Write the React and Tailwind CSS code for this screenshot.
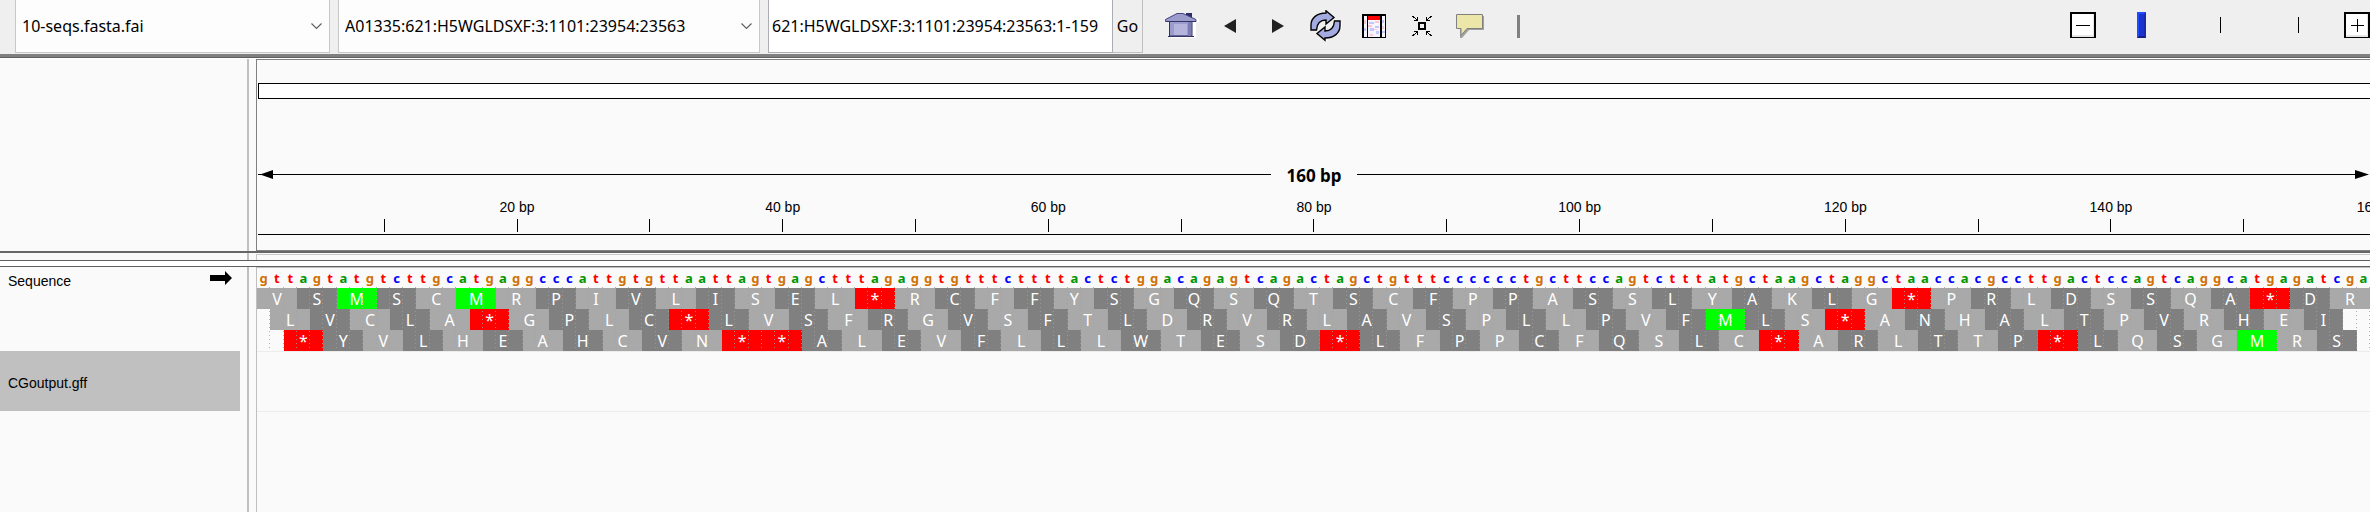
const SEQUENCE =
  'gttagtatgtcttgcatgaggcccattgtgttaattagtgagctttagaggtgtttcttttactctggacagagtcagactagctgtttcccccctgcttccagtctttatgctaagctaggctaaccacgccttgactccagtcaggcatgagatcga';

const AMINO_ACIDS =
  'FFLLSSSSYY**CC*WLLLLPPPPHHQQRRRRIIIMTTTTNNKKSSRRVVVVAAAADDEEGGGG';

const BASE_COLORS = {
  a: 'text-[#009600]',
  c: 'text-[#0000ff]',
  g: 'text-[#d17105]',
  t: 'text-[#ff0000]',
};

const FRAMES = [0, 1, 2];
const TICKS = [10, 20, 30, 40, 50, 60, 70, 80, 90, 100, 110, 120, 130, 140, 150];
const BASE_GRID = 'grid grid-cols-[repeat(159,minmax(0,1fr))]';

function translate(offset) {
  const acids = [];
  for (let i = offset; i + 3 <= SEQUENCE.length; i += 3) {
    const [x, y, z] = [0, 1, 2].map((k) => 'tcag'.indexOf(SEQUENCE[i + k]));
    acids.push(AMINO_ACIDS[x * 16 + y * 4 + z]);
  }
  return acids;
}

function acidColor(acid, index) {
  if (acid === 'M') return 'bg-[#00ff00]';
  if (acid === '*') return 'bg-[#ff0000]';
  return index % 2 === 0 ? 'bg-[#a9a9a9]' : 'bg-[#808080]';
}

function HomeIcon() {
  return (
    <svg width="34" height="28" viewBox="0 0 34 28" aria-hidden="true">
      <path d="M5 26h26V10h3V7l-3-1" fill="#ffffff" />
      <path d="M21 1h6v6h-6z" fill="#2c2c66" />
      <path d="M4.500 9h22.500v15H4.500z" fill="#9c9ccc" stroke="#333366" />
      <path d="M9 12h13v11H9z" fill="#b4b4dc" />
      <path d="M23 10h3v14h-3z" fill="#7c7cb2" />
      <path d="M.5 7.500 12 1.500h6l13 6V9.500H.5z" fill="#9c9ccc" stroke="#444480" />
      <path d="M1 9.500h30" stroke="#333366" />
      <path d="M3 24.500h26" stroke="#333366" />
    </svg>
  );
}

function RefreshIcon() {
  const arrow = 'M1 20V15C1 8 7 3 16 3V.8L24 7.500 16 14V10C11 10 7 13 6.500 20Z';
  return (
    <svg width="32" height="32" viewBox="0 0 32 32" aria-hidden="true">
      <path d="M17 31l-2-2M31 13v6" stroke="#ffffff" strokeWidth="2" />
      <g fill="#a3abe0" stroke="#000000" strokeWidth="1.4">
        <path d={arrow} />
        <path d={arrow} transform="rotate(180 15.5 15.5)" />
      </g>
    </svg>
  );
}

function RegionIcon() {
  return (
    <svg width="24" height="24" viewBox="0 0 24 24" shapeRendering="crispEdges" aria-hidden="true">
      <path d="M0 0h24v24H0z" fill="#000000" />
      <path d="M2 2h3v21H2zM6 2h12v21H6zM20 2h3v21h-3z" fill="#f6f4ff" />
      <path d="M6 2h12v4H6z" fill="#ff0000" />
      <path d="M7 8h5v2H7zM13 12h4v2h-4zM8 14h4v3H8zM14 17h3v3h-3zM20 6h2v3h-2zM2 14h2v3H2zM20 17h3v2h-3z" fill="#c4c6ff" />
      <path d="M13 7h4v2h-4zM6 11h4v2H6zM12 15h3v1h-3zM8 20h3v2H8zM2 6h2v4H2zM20 12h2v3h-2z" fill="#ffc8c8" />
    </svg>
  );
}

function CollapseIcon() {
  return (
    <svg width="20" height="20" viewBox="0 0 20 20" shapeRendering="crispEdges" aria-hidden="true">
      <rect x="7" y="7" width="6" height="6" fill="none" stroke="#000000" strokeWidth="2" />
      <path
        d="M0 0h2v1h1v1h1v1h1V1h1v4H2V4h2V3H3V2H1V1H0zM20 0h-2v1h-1v1h-1v1h-1V1h-1v4h4V4h-2V3h1V2h2V1h1zM0 20h2v-1h1v-1h1v-1h1v2h1v-4H2v1h2v1H3v1H1v1H0zM20 20h-2v-1h-1v-1h-1v-1h-1v2h-1v-4h4v1h-2v1h1v1h2v1h1z"
        fill="#000000"
      />
    </svg>
  );
}

function BubbleIcon() {
  return (
    <svg width="28" height="24" viewBox="0 0 28 24" aria-hidden="true">
      <path d="M2 2h26v14H13l-7 8H4v-8z" fill="#a0a0a0" />
      <path d="M.5.5h26v14H11l-6 7v-7H.5z" fill="#ece7a8" stroke="#808080" />
    </svg>
  );
}

function ZoomIcon({ plus }) {
  return (
    <svg width="26" height="26" viewBox="0 0 26 26" shapeRendering="crispEdges" aria-hidden="true">
      <path d="M0 0h26v26H0z" fill="#000000" />
      <path d="M2 2h22v23H2z" fill="#e6e6e6" />
      <path d="M2 2h21v21H2z" fill="#ffffff" />
      <path d={plus ? 'M7 13h13v1H7zM13 7h1v13h-1z' : 'M6 13h14v1H6z'} fill="#000000" />
    </svg>
  );
}

function Triangle({ left }) {
  return (
    <svg width="12" height="14" viewBox="0 0 12 14" aria-hidden="true">
      <path d={left ? 'M0 7 12 0V14Z' : 'M12 7 0 0V14Z'} fill="#222222" />
    </svg>
  );
}

function ToolButton({ label, children }) {
  return (
    <button type="button" aria-label={label} className="flex h-12 w-12 shrink-0 items-center justify-center">
      {children}
    </button>
  );
}

function Combo({ label, value, className }) {
  return (
    <div className={`relative shrink-0 border-x border-b border-[#c8c8c8] bg-[#fdfdfd] ${className}`}>
      <select
        aria-label={label}
        defaultValue={value}
        className="h-full w-full appearance-none bg-transparent px-1.5 outline-none"
      >
        <option>{value}</option>
      </select>
      <svg
        width="11"
        height="7"
        viewBox="0 0 11 7"
        aria-hidden="true"
        className="pointer-events-none absolute top-[23px] right-[7px]"
      >
        <path d="M.5.5l5 5 5-5" fill="none" stroke="#606060" strokeWidth="1.2" />
      </svg>
    </div>
  );
}

function Toolbar() {
  return (
    <header className="flex h-[54px] shrink-0 items-stretch overflow-hidden bg-[#efefef] pl-[15px] text-[16px]">
      <Combo label="Genome" value="10-seqs.fasta.fai" className="mb-px w-[315px]" />
      <Combo
        label="Chromosome"
        value="A01335:621:H5WGLDSXF:3:1101:23954:23563"
        className="mb-px ml-2 w-[422px]"
      />
      <input
        aria-label="Locus"
        defaultValue="621:H5WGLDSXF:3:1101:23954:23563:1-159"
        className="mb-px ml-2 w-[345px] shrink-0 border-x border-b border-[#abadb3] bg-white px-[3px] outline-none"
      />
      <button type="button" className="mb-px w-[30px] shrink-0 border-r border-b border-[#c0c0c0]">
        Go
      </button>
      <div className="ml-[15px] flex h-[52px] items-center">
        <ToolButton label="Home"><HomeIcon /></ToolButton>
        <ToolButton label="Back"><Triangle left /></ToolButton>
        <ToolButton label="Forward"><Triangle /></ToolButton>
        <ToolButton label="Refresh"><RefreshIcon /></ToolButton>
        <ToolButton label="Define a region of interest"><RegionIcon /></ToolButton>
        <ToolButton label="Resize tracks to fit in window"><CollapseIcon /></ToolButton>
        <ToolButton label="Popup text behavior"><BubbleIcon /></ToolButton>
        <div className="ml-[23px] h-[23px] w-[3px] bg-[#808080]" />
      </div>
      <div className="ml-auto flex h-[50px] shrink-0 items-center">
        <button type="button" aria-label="Zoom out"><ZoomIcon /></button>
        <div className="relative mx-[41px] h-[26px] w-[166px]">
          <div className="absolute inset-x-1 top-[5px] flex justify-between">
            <span className="h-4 w-px bg-black" />
            <span className="h-4 w-px bg-black" />
            <span className="h-4 w-px bg-black" />
          </div>
          <input
            type="range"
            aria-label="Zoom level"
            min="0"
            max="2"
            defaultValue="0"
            className="relative block h-[26px] w-full appearance-none bg-transparent [&::-webkit-slider-thumb]:h-[26px] [&::-webkit-slider-thumb]:w-[9px] [&::-webkit-slider-thumb]:appearance-none [&::-webkit-slider-thumb]:border-2 [&::-webkit-slider-thumb]:border-t-[#1f4cff] [&::-webkit-slider-thumb]:border-r-[#1a2cae] [&::-webkit-slider-thumb]:border-b-[#142080] [&::-webkit-slider-thumb]:border-l-[#1f4cff] [&::-webkit-slider-thumb]:bg-[#1a32d0]"
          />
        </div>
        <button type="button" aria-label="Zoom in"><ZoomIcon plus /></button>
      </div>
    </header>
  );
}

function NameColumn({ children }) {
  return (
    <div className="mr-[7px] w-[249px] shrink-0 border-r-2 border-[#c0c0c0]">{children}</div>
  );
}

function Ruler() {
  return (
    <div className="min-w-0 flex-1 overflow-hidden border-t border-b border-l border-[#808080] pb-[15px] pl-px">
      <div className="mt-[23px] h-4 border-y border-l border-black bg-white" />
      <div className="mt-[61px] flex h-[29px] items-center">
        <svg width="15" height="9" viewBox="0 0 15 9" aria-hidden="true">
          <path d="M0 4h3v1H0zM2 4.500 15 0V9Z" />
        </svg>
        <div className="h-px flex-1 bg-black" />
        <span className="px-[15px] pt-0.5 text-[17px] leading-[29px] font-bold">160 bp</span>
        <div className="h-px flex-1 bg-black" />
        <svg width="15" height="9" viewBox="0 0 15 9" aria-hidden="true">
          <path d="M14 4.500 0 0V9Z" />
        </svg>
      </div>
      <div className={`mt-2.5 font-['Liberation_Sans',sans-serif] text-[14px] leading-4 whitespace-nowrap ${BASE_GRID}`}>
        {TICKS.map((tick) => (
          <div key={tick} className="row-start-1 flex flex-col items-center" style={{ gridColumnStart: tick }}>
            <span className="h-4">{tick % 20 === 0 ? `${tick} bp` : ''}</span>
            <span className="mt-1 h-[13px] w-px bg-black" />
          </div>
        ))}
        <span className="col-start-[159] row-start-1">160 bp</span>
      </div>
      <div className="mt-0.5 h-px bg-black" />
    </div>
  );
}

function SequenceTrack() {
  return (
    <div className="relative border-b border-[#ececec]">
      <div className={`h-5 text-center text-[13px] leading-5 font-bold ${BASE_GRID}`}>
        {SEQUENCE.split('').map((base, i) => (
          <span key={i} className={BASE_COLORS[base]}>{base}</span>
        ))}
      </div>
      {FRAMES.map((offset) => (
        <div key={offset} className={`h-[21px] text-center text-[16px] leading-[22px] text-white ${BASE_GRID}`}>
          {offset > 0 && <span style={{ gridColumn: `span ${offset}` }} />}
          {translate(offset).map((acid, i) => (
            <span key={i} className={`col-span-3 h-[21px] ${acidColor(acid, i)}`}>{acid}</span>
          ))}
        </div>
      ))}
      <div className={`pointer-events-none absolute inset-x-0 top-[19px] h-[61px] ${BASE_GRID}`}>
        {SEQUENCE.split('').map((_, i) => (
          <span
            key={i}
            className="w-px justify-self-end bg-[repeating-linear-gradient(to_bottom,#a0a0a0cc_0_1px,transparent_1px_4px)]"
          />
        ))}
      </div>
    </div>
  );
}

export default function App() {
  return (
    <div className="flex min-h-screen flex-col overflow-hidden bg-[#fafafa] font-['Noto_Sans',sans-serif] text-black">
      <Toolbar />
      <div className="h-1 border-b border-[#606060] bg-[#808080]" />
      <div className="h-px bg-white" />
      <section className="flex">
        <NameColumn />
        <Ruler />
      </section>
      <div className="h-0.5 bg-[#666666]" />
      <div className="flex h-[7px]">
        <NameColumn />
        <div className="mt-px flex-1 border-t border-l border-[#c8c8c8]" />
      </div>
      <div className="h-[7px] border-y border-[#606060] bg-white" />
      <main className="flex flex-1">
        <NameColumn>
          <div className="flex h-[84px] items-start justify-between pr-[15px] pl-2 font-['Liberation_Sans',sans-serif] text-[14px] leading-7">
            <span>Sequence</span>
            <svg width="22" height="14" viewBox="0 0 22 14" aria-hidden="true" className="mt-1">
              <path d="M0 4h15V0l7 7-7 7v-4H0Z" />
            </svg>
          </div>
          <div className="mr-[7px] flex h-[60px] items-center bg-[#c0c0c0] pt-1 pl-2 font-['Liberation_Sans',sans-serif] text-[14px]">
            CGoutput.gff
          </div>
        </NameColumn>
        <div className="min-w-0 flex-1 border-t border-l border-[#c0c0c0]">
          <SequenceTrack />
          <div className="h-[60px] border-b border-[#ececec]" />
        </div>
      </main>
    </div>
  );
}
